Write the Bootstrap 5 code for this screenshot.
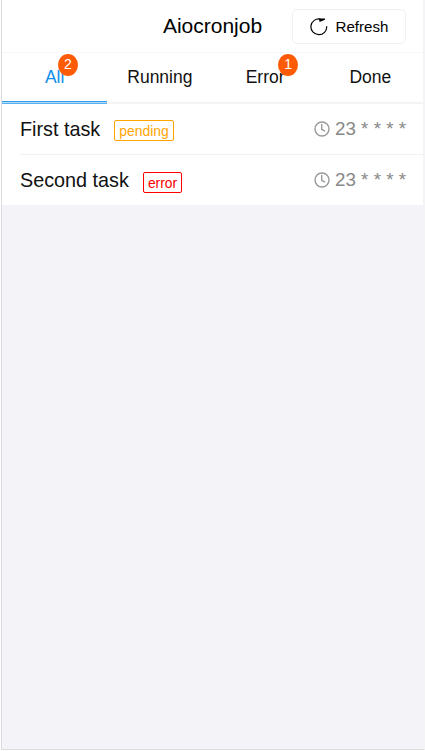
<!DOCTYPE html>
<html lang="en">
<head>
<meta charset="utf-8">
<meta name="viewport" content="width=device-width, initial-scale=1">
<title>Aiocronjob</title>
<link href="https://cdn.jsdelivr.net/npm/bootstrap@5.3.0/dist/css/bootstrap.min.css" rel="stylesheet">
<style>
body { font-family: "Liberation Sans", Arial, sans-serif; color: #000; background: #fff; line-height: 1; }
.app-shell { height: 750px; background: #f4f3f8; border: 1px solid #dcdce0; border-top: 0; border-right: 2px solid #f4f4f6; margin-left: 1px; }
.app-header { height: 53px; border-bottom: 1px solid #f8f8f8; display: grid; grid-template-columns: 1fr auto 1fr; }
.app-title { font-size: 21px; font-weight: 400; line-height: 24px; }
.btn-refresh { --bs-btn-color: #000; --bs-btn-border-color: #f1f1f1; --bs-btn-border-radius: 5px; --bs-btn-font-size: 15.1px; width: 114px; height: 35px; margin-right: 17px; line-height: 18px; padding-top: 1px; }
.app-tabs { height: 51px; border-bottom: 2px solid #f4f4f4; }
.app-tabs .nav-link { color: #111; font-size: 17.5px; line-height: 20px; height: 51px; padding: 14px 0 0; border-radius: 0; }
.app-tabs .nav-link.active { color: #108ee9; background: linear-gradient(#2f9dec 0 1px, #b5dbf7 1px 2px, #58b0f0 2px) bottom / 100% 3px no-repeat; }
.count-dot { left: calc(100% - 6.5px); top: -13px; width: 20px; height: 22px; background: #ff5b05; color: #fff; font-size: 14px; line-height: 20px; border-radius: 50%; }
.task-row { height: 51px; margin-left: 18px; padding-right: 17px; }
.task-row + .task-row { border-top: 1px solid #f1f1f1; }
.task-row:first-child { height: 50px; padding-bottom: 1px; }
.task-name { font-size: 19.8px; line-height: 24px; color: #111; }
.task-state { font-size: 13.9px; line-height: 18px; height: 21px; border: 1px solid; border-radius: 2px; padding: 1px 4px 0; margin: 4px 0 0 14px; }
.state-pending { color: #ffa500; }
.state-error { color: #f00; }
.task-cron { font-size: 18.8px; line-height: 24px; color: #888; }
.task-cron svg { margin-right: 5px; }
</style>
</head>
<body>
<div class="app-shell">
  <header class="app-header align-items-center bg-white">
    <span></span>
    <h1 class="app-title m-0">Aiocronjob</h1>
    <button type="button" class="btn btn-refresh d-flex align-items-center justify-content-center px-0 pb-0 ms-auto">
      <svg width="18" height="18" viewBox="0 0 18 18" class="me-2" fill="none" stroke="#000" stroke-width="1.2"><path d="M10.5 1.1A7.9 7.9 0 1 0 16.7 8.3"/><path d="M8.8 .5h6.2v1.2L9.6 4z" fill="#000" stroke="none"/></svg>Refresh
    </button>
  </header>
  <nav class="app-tabs nav nav-justified flex-nowrap bg-white">
    <div class="nav-item w-25"><a class="nav-link active" href="#"><span class="position-relative">All<span class="count-dot position-absolute">2</span></span></a></div>
    <div class="nav-item w-25"><a class="nav-link" href="#">Running</a></div>
    <div class="nav-item w-25"><a class="nav-link" href="#"><span class="position-relative">Error<span class="count-dot position-absolute">1</span></span></a></div>
    <div class="nav-item w-25"><a class="nav-link" href="#">Done</a></div>
  </nav>
  <main class="bg-white">
    <div class="task-row d-flex align-items-center">
      <span class="task-name">First task</span><span class="task-state state-pending">pending</span>
      <span class="task-cron ms-auto d-flex align-items-center"><svg width="16" height="16" viewBox="0 0 16 16" fill="none" stroke="#999" stroke-width="1.4"><circle cx="8" cy="8" r="7"/><path d="M7.7 3v5.3l3.3 1.9"/></svg>23 * * * *</span>
    </div>
    <div class="task-row d-flex align-items-center">
      <span class="task-name">Second task</span><span class="task-state state-error">error</span>
      <span class="task-cron ms-auto d-flex align-items-center"><svg width="16" height="16" viewBox="0 0 16 16" fill="none" stroke="#999" stroke-width="1.4"><circle cx="8" cy="8" r="7"/><path d="M7.7 3v5.3l3.3 1.9"/></svg>23 * * * *</span>
    </div>
  </main>
</div>
<script src="https://cdn.jsdelivr.net/npm/bootstrap@5.3.0/dist/js/bootstrap.bundle.min.js"></script>
</body>
</html>
